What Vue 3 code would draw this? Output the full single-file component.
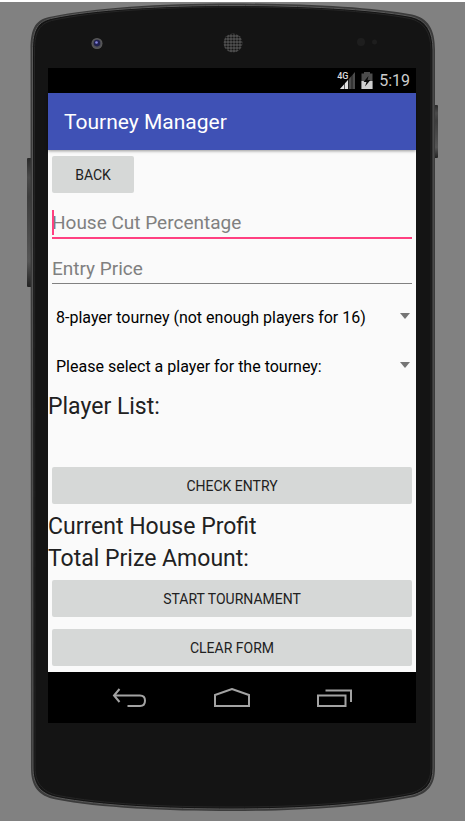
<script setup>
import { ref } from 'vue'

const houseCut = ref('')
const entryPrice = ref('')
const size = ref('8')
const player = ref('')
const players = ref([])

function clearForm() {
  houseCut.value = ''
  entryPrice.value = ''
  player.value = ''
  players.value = []
}
</script>

<template>
  <div class="stage">
    <svg class="shell" viewBox="0 0 465 821" preserveAspectRatio="none" aria-hidden="true">
      <defs>
        <linearGradient id="key" x1="0" x2="0" y1="0" y2="1">
          <stop offset="0" stop-color="#2a2a2a" />
          <stop offset="0.15" stop-color="#4a4a4a" />
          <stop offset="0.3" stop-color="#3c3c3c" />
          <stop offset="0.8" stop-color="#555" />
          <stop offset="1" stop-color="#222" />
        </linearGradient>
        <radialGradient id="lens">
          <stop offset="0" stop-color="#5050c8" />
          <stop offset="0.4" stop-color="#24245c" />
          <stop offset="0.6" stop-color="#4a4a50" />
          <stop offset="1" stop-color="#5c5c5c" />
        </radialGradient>
        <pattern id="mesh" width="3" height="3" patternUnits="userSpaceOnUse">
          <rect width="3" height="3" fill="#505050" />
          <circle cx="1.5" cy="1.5" r="1.1" fill="#151515" />
        </pattern>
      </defs>
      <rect x="27" y="158" width="5" height="129" rx="1" fill="url(#key)" />
      <rect x="433" y="105" width="5" height="53" rx="1" fill="url(#key)" />
      <path
        d="M30.5 50C30.5 27 36 19 52 16.5C92 8 160 3.5 232 3.5C305 3.5 370 7 412 14.5C428 18 435 29 435 50V768C435 785 428 793 414 797C365 807 300 811 232 811C165 811 100 808 56 799.5C38 796 31 786 31 768Z"
        fill="#3b3b3b"
      />
      <path
        d="M32.5 50C32.5 29 38 21 53 18C93 9.500 160 5.500 232 5.500C305 5.500 370 9 411 16.500C426 20 433 31 433 50V768C433 784 426 791 413 795C364 805 300 809 232 809C165 809 101 806 57 797.500C40 794 33 784 33 768Z"
        fill="#141414"
        stroke="#5a5a5a"
        stroke-width="1"
      />
      <path
        d="M34.500 50C34.500 31 40 23 54 20C94 11.500 160 7 232 7C305 7 370 11 410 18.500C424 22 431 32 431 50V768C431 782 424 789 412 793C363 803 300 807 232 807C165 807 102 804 58 795.500C42 792 35 782 35 768Z"
        fill="#141414"
        stroke="#252525"
        stroke-width="1"
      />
      <circle cx="97" cy="43.500" r="5.500" fill="url(#lens)" />
      <circle cx="97" cy="43" r="3.200" fill="#20204e" />
      <circle cx="96.500" cy="42.500" r="1.300" fill="#8585e0" />
      <circle cx="233" cy="43" r="9.500" fill="url(#mesh)" />
      <circle cx="361" cy="42" r="4" fill="#1e1e1e" />
      <circle cx="374.500" cy="42" r="2.500" fill="#1e1e1e" />
    </svg>

    <div class="screen">
      <div class="status">
        <div class="signal">
          <svg viewBox="0 0 18 18" width="18" height="18" aria-hidden="true">
            <path d="M3 17L18 0V17Z" fill="#4c4c4c" />
            <path d="M3 17L11 8V17Z" fill="#e0e0e0" />
            <path d="M7.500 8V17M11.500 5V17M15 2V17" stroke="#000" stroke-width="0.600" />
          </svg>
          <span class="net">4G</span>
        </div>
        <svg viewBox="0 0 12 18" width="12" height="18" aria-hidden="true">
          <path d="M0.500 1.500H3V0H9V1.500H11.500V17H0.500Z" fill="#4c4c4c" />
          <path d="M0.500 9H11.500V17H0.500Z" fill="#cfcfcf" />
          <path d="M7.500 4L2.500 10H5.500L4 14.500L9.500 8H6.500Z" fill="#080808" />
        </svg>
        <time class="clock">5:19</time>
      </div>

      <header class="appbar"><h1>Tourney Manager</h1></header>

      <main class="form">
        <div class="row"><button class="btn back" type="button">BACK</button></div>

        <div class="fields">
          <div class="field focused">
            <input v-model="houseCut" type="text" placeholder="House Cut Percentage" aria-label="House Cut Percentage" />
            <span class="caret"></span>
          </div>
          <div class="field">
            <input v-model="entryPrice" type="text" placeholder="Entry Price" aria-label="Entry Price" />
          </div>
        </div>

        <div class="spinner">
          <select v-model="size" aria-label="Tourney size">
            <option value="8">8-player tourney (not enough players for 16)</option>
          </select>
        </div>
        <div class="spinner">
          <select v-model="player" aria-label="Player">
            <option value="">Please select a player for the tourney:</option>
          </select>
        </div>

        <h2>Player List:</h2>
        <ul class="players">
          <li v-for="p in players" :key="p">{{ p }}</li>
        </ul>

        <div class="row"><button class="btn" type="button">CHECK ENTRY</button></div>
        <h2>Current House Profit</h2>
        <h2>Total Prize Amount:</h2>
        <div class="row"><button class="btn" type="button">START TOURNAMENT</button></div>
        <div class="row"><button class="btn" type="button" @click="clearForm">CLEAR FORM</button></div>
      </main>

      <nav class="navbar">
        <button type="button" aria-label="Back">
          <svg viewBox="0 0 36 20" width="36" height="20">
            <path d="M7.500 1L2 7.500L7.500 14M2 7.500H28Q33 7.500 33 12.700T28 18H15.500" />
          </svg>
        </button>
        <button type="button" aria-label="Home">
          <svg viewBox="0 0 36 20" width="36" height="20">
            <path d="M1 18V7L18 1L35 7V18Z" />
          </svg>
        </button>
        <button type="button" aria-label="Recent apps">
          <svg viewBox="0 0 36 20" width="36" height="20">
            <path d="M2 7.500H29.500V18H2ZM9.500 2.500H35V14" />
          </svg>
        </button>
      </nav>
    </div>
  </div>
</template>

<style>
body {
  margin: 0;
  background: #818181;
}
</style>

<style scoped>
.stage {
  position: relative;
  box-sizing: border-box;
  min-height: 100vh;
  padding: 68px 49px 98px 48px;
  background: linear-gradient(#fff 2px, #818181 2px);
  font-family: Roboto, "Liberation Sans", sans-serif;
}
.shell {
  position: absolute;
  inset: 0;
  width: 100%;
  height: 100%;
}
.screen {
  position: relative;
  background: #fafafa;
  color: #212121;
}
.status {
  display: flex;
  align-items: center;
  justify-content: flex-end;
  gap: 6px;
  height: 25px;
  padding-right: 6px;
  background: #000;
  color: #ccc;
}
.signal {
  position: relative;
  display: flex;
}
.net {
  position: absolute;
  left: 0;
  top: 0;
  font-size: 9px;
  line-height: 9px;
  font-weight: 500;
  color: #ddd;
}
.clock {
  font-size: 16px;
  line-height: 24px;
}
.appbar {
  position: relative;
  display: flex;
  align-items: center;
  height: 57px;
  padding: 0 16px;
  background: #3f51b5;
  color: #fff;
  box-shadow: 0 1px 3px rgba(0, 0, 0, 0.4);
}
h1,
h2 {
  margin: 0;
  font-weight: 400;
}
h1 {
  font-size: 21px;
  line-height: 28px;
}
h2 {
  padding-top: 2px;
  font-size: 23px;
  line-height: 30px;
}
.row {
  display: flex;
  padding: 6px 4px;
}
.btn {
  flex: 1;
  height: 37px;
  padding: 0;
  border: 0;
  border-radius: 2px;
  background: #d6d8d7;
  color: #212121;
  font: 400 14px/20px Roboto, "Liberation Sans", sans-serif;
}
.btn.back {
  flex: 0 0 82px;
}
.fields {
  padding: 1px 4px 0;
}
.field {
  position: relative;
  height: 46px;
}
.field input {
  box-sizing: border-box;
  display: block;
  width: 100%;
  height: 38px;
  padding: 8px 0 0;
  border: 0;
  border-bottom: 1px solid #818181;
  border-radius: 0;
  outline: 0;
  background: transparent;
  color: #212121;
  font: 400 19px/28px Roboto, "Liberation Sans", sans-serif;
}
.field input::placeholder {
  color: #808080;
  opacity: 1;
}
.focused input {
  border-color: #ff4081;
  box-shadow: 0 1px #ff4081;
  caret-color: transparent;
}
.caret {
  position: absolute;
  left: 0;
  top: 10px;
  width: 2px;
  height: 25px;
  background: #ff4081;
}
.spinner {
  position: relative;
  height: 49px;
  padding: 0 4px;
}
.spinner select {
  box-sizing: border-box;
  width: 100%;
  height: 49px;
  padding: 2px 24px 0 4px;
  border: 0;
  appearance: none;
  background: transparent;
  color: #000;
  font: 400 16px/24px Roboto, "Liberation Sans", sans-serif;
}
.spinner::after {
  content: "";
  position: absolute;
  right: 6px;
  top: 21px;
  border: 5px solid transparent;
  border-top: 6px solid #757575;
  border-bottom: 0;
  pointer-events: none;
}
.players {
  min-height: 39px;
  margin: 0;
  padding: 0;
  list-style: none;
}
.navbar {
  display: flex;
  align-items: center;
  justify-content: center;
  gap: 66px;
  height: 51px;
  background: #000;
}
.navbar button {
  display: flex;
  padding: 0;
  border: 0;
  background: none;
}
.navbar path {
  fill: none;
  stroke: #a3a3a3;
  stroke-width: 2;
}
</style>
